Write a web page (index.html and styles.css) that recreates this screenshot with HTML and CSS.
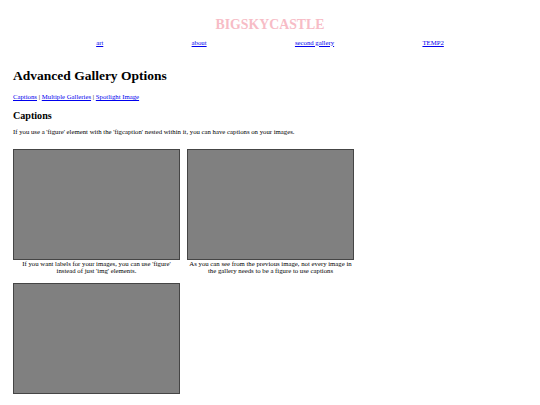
FILE: index.html
```html
<!DOCTYPE html>
<html lang="en">
<head>
<meta charset="utf-8">
<title>Advanced Gallery Options</title>
<link rel="stylesheet" href="styles.css">
</head>
<body>
<header class="site-header">
  <div class="site-title">BIGSKYCASTLE</div>
  <nav class="site-nav">
    <a href="#">art</a>
    <a href="#">about</a>
    <a href="#">second gallery</a>
    <a href="#">TEMP2</a>
  </nav>
</header>
<main class="content">
  <h1 class="page-title">Advanced Gallery Options</h1>
  <p class="toc"><a href="#captions">Captions</a> | <a href="#multiple">Multiple Galleries</a> | <a href="#spotlight">Spotlight Image</a></p>
  <h2 class="section-title" id="captions">Captions</h2>
  <p class="intro">If you use a 'figure' element with the 'figcaption' nested within it, you can have captions on your images.</p>
  <div class="gallery">
    <figure class="item">
      <div class="ph"></div>
      <figcaption class="cap">If you want labels for your images, you can use 'figure' instead of just 'img' elements.</figcaption>
    </figure>
    <figure class="item">
      <div class="ph"></div>
      <figcaption class="cap">As you can see from the previous image, not every image in the gallery needs to be a figure to use captions</figcaption>
    </figure>
    <div class="item">
      <div class="ph"></div>
    </div>
  </div>
</main>
</body>
</html>
```

FILE: styles.css
```css
html, body {
  margin: 0;
  padding: 0;
  background: #ffffff;
}

body {
  padding: 0 13px;
  font-family: "Liberation Serif", "Times New Roman", serif;
  font-size: 6.75px;
  color: #000000;
}

a {
  color: #0000ee;
  text-decoration: underline;
}

.site-header {
  padding-top: 16.5px;
}

.site-title {
  text-align: center;
  font-family: "Liberation Serif", "Times New Roman", serif;
  font-size: 13.8px;
  font-weight: bold;
  color: #f7bcc6;
  line-height: 15px;
}

.site-nav {
  display: flex;
  justify-content: space-around;
  width: 436px;
  margin: 7px auto 0;
}

.content {
  padding-top: 22.5px;
}

.page-title {
  margin: 0;
  font-family: "Liberation Serif", "Times New Roman", serif;
  font-size: 13.5px;
  font-weight: bold;
}

.toc {
  margin: 9px 0 0;
}

.section-title {
  margin: 9.5px 0 0;
  font-family: "Liberation Serif", "Times New Roman", serif;
  font-size: 10.1px;
  font-weight: bold;
}

.intro {
  margin: 7.5px 0 0;
}

.gallery {
  display: grid;
  grid-template-columns: repeat(2, 167px);
  column-gap: 7px;
  row-gap: 9px;
  margin-top: 14px;
  align-items: start;
}

.item {
  margin: 0;
  width: 167px;
}

.ph {
  box-sizing: border-box;
  width: 167px;
  height: 111px;
  background: #808080;
  border: 1px solid #454545;
}

.cap {
  margin: 0 -1px;
  text-align: center;
}
```
